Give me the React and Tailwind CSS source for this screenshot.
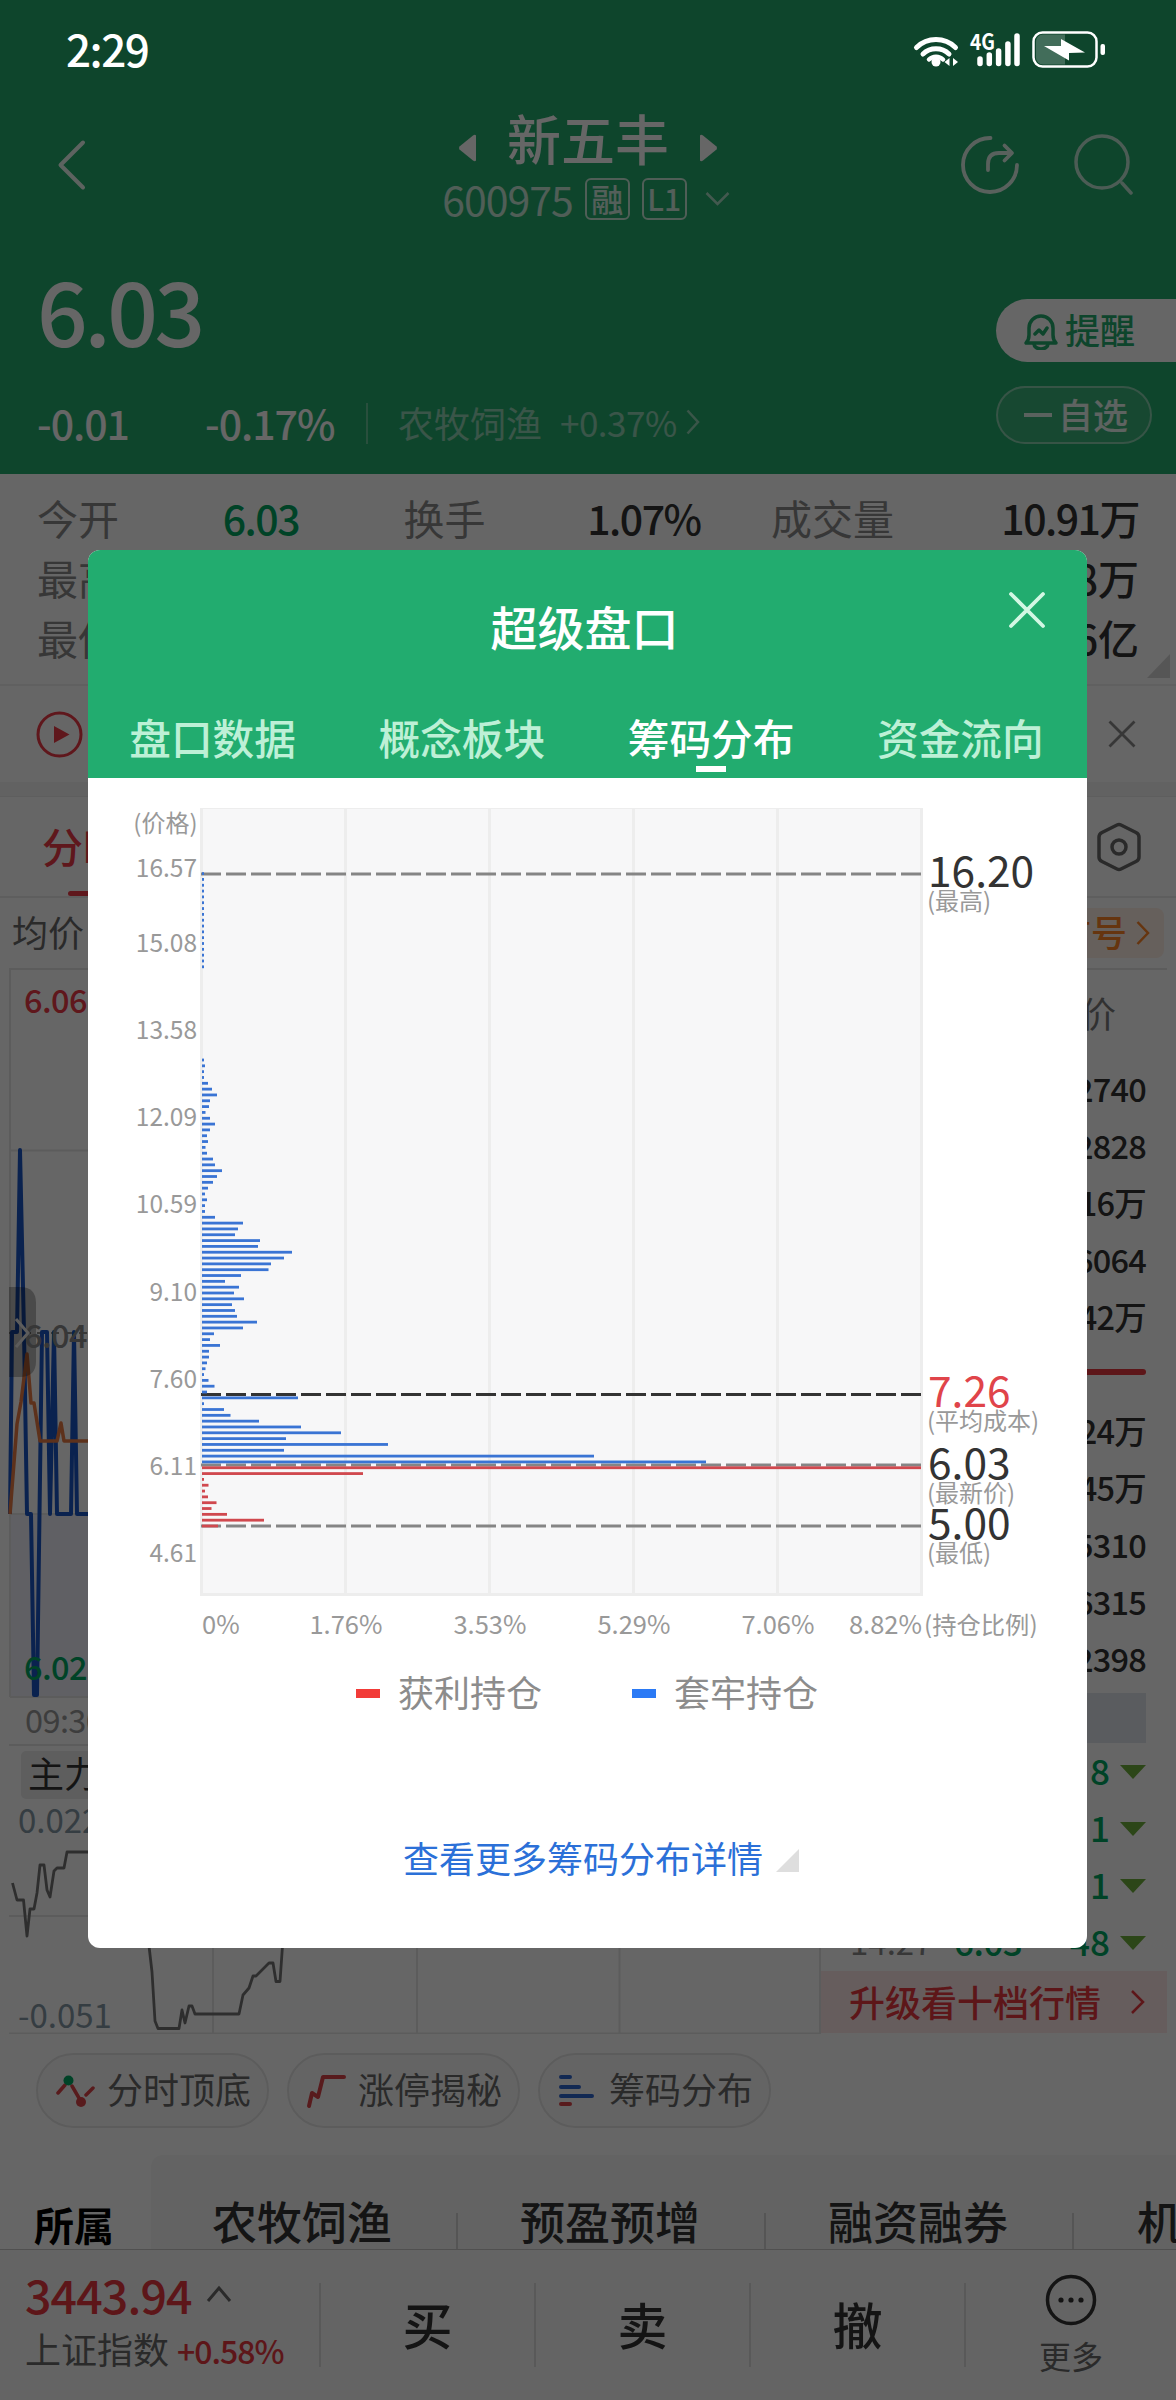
import React from "react";

const GREEN = "#00a862";

// 筹码分布: 从最低价往上, 每档的柱长
const profitChips = [16, 62, 25, 9.5, 14.5, 6, 3, 6.5, 2, 161, 719];
const lockedChips = [
  504, 392, 82, 186, 84, 139, 99, 57, 28.5, 22, 2, 96, 5, 12.5, 6.5, 2, 3.5, 5,
  7, 7, 18, 8, 12, 41, 55, 35, 33, 30, 42, 32, 37, 23, 39, 66.5, 69, 82, 90, 56,
  58, 33, 36, 41, 13, 3, 3, 5, 3, 6, 11, 15, 20, 13, 11, 5, 3.5, 6, 5, 8, 13, 8,
  3.5, 7, 8, 15, 10, 6, 2, 2, 3, 2,
];
const topChips = Array(17).fill(2);

const chipBars = [
  ...profitChips.map((w, i) => ({ w, k: i, color: "#d0484e" })),
  ...lockedChips.map((w, i) => ({ w, k: i + 11, color: "#3a74d4" })),
  ...topChips.map((w, i) => ({ w, k: i + 96, color: "#3a74d4" })),
];

const priceTicks = [
  ["16.57", 877],
  ["15.08", 952],
  ["13.58", 1039],
  ["12.09", 1126],
  ["10.59", 1213],
  ["9.10", 1301],
  ["7.60", 1388],
  ["6.11", 1475],
  ["4.61", 1562],
];

const ratioTicks = [
  ["1.76%", 346],
  ["3.53%", 490],
  ["5.29%", 634],
  ["7.06%", 778],
];

const priceMarks = [
  { price: "16.20", name: "(最高)", line: 874, y: 887, stroke: "#858585", fill: "#333" },
  { price: "7.26", name: "(平均成本)", line: 1394.5, y: 1407, stroke: "#333", fill: "#e0444a" },
  { price: "6.03", name: "(最新价)", line: 1465, y: 1479, stroke: "#858585", fill: "#333" },
  { price: "5.00", name: "(最低)", line: 1526, y: 1539, stroke: "#858585", fill: "#333" },
];

const modalTabs = ["盘口数据", "概念板块", "筹码分布", "资金流向"];
const asks = ["2740", "2828", "16万", "6064", "42万"];
const bids = ["24万", "45万", "5310", "6315", "2398"];
const deals = [
  { vol: "8" },
  { vol: "1" },
  { vol: "1" },
  { time: "14:27", price: "6.03", vol: "48" },
];

function StatusBar() {
  return (
    <div className="absolute inset-x-0 top-0 flex h-[100px] justify-between pl-[66px] pr-[70px] text-white">
      <span className="mt-[18px] text-[44px] font-medium leading-[60px] tracking-[-1.500px]">
        2:29
      </span>
      <svg className="mt-[28px]" width="194" height="44" viewBox="912 28 194 44" fill="none">
        <g stroke="#fff" strokeWidth="5" strokeLinecap="round">
          <path d="M916.500 47.500a28 28 0 0 1 39 0" />
          <path d="M923 54a19 19 0 0 1 26 0" />
          <path d="M929 59.500a10 10 0 0 1 14 0" strokeWidth="4.500" />
        </g>
        <circle cx="936" cy="62" r="4.500" fill="#fff" />
        <path d="M949.500 58v8l-5-4zM953 58v8l5-4z" fill="#fff" />
        <text x="970" y="50" fill="#fff" fontSize="22" fontWeight="700" textLength="25" lengthAdjust="spacingAndGlyphs">
          4G
        </text>
        <g stroke="#fff" strokeWidth="5.500" strokeLinecap="round">
          <path d="M980 59v4.500M989.300 55v8.500M998.600 51v12.500M1007.900 44v19.500M1017 36v27.500" />
        </g>
        <rect x="1033.500" y="32.500" width="63" height="34" rx="9" stroke="#fff" strokeWidth="2.500" />
        <path d="M1043 34.500h22v30h-22a7 7 0 0 1-7-7v-16a7 7 0 0 1 7-7z" fill="#fff" fillOpacity=".22" />
        <path d="M1061 39l24 13.500-16 .5v7.500l-25-14.500h17z" fill="#fff" />
        <rect x="1100.500" y="44" width="4.500" height="11" rx="2" fill="#fff" />
      </svg>
    </div>
  );
}

function Header() {
  return (
    <header className="h-[474px] bg-[#25ac6e] pt-[100px] text-white">
      <div className="flex h-[130px]">
        <div className="w-[300px] pl-[56px] pt-[38px]">
          <svg width="32" height="54" viewBox="0 0 32 54" fill="none" stroke="#fff" strokeOpacity=".9" strokeWidth="4" strokeLinecap="round" strokeLinejoin="round">
            <path d="M27 4.500L4.500 27 27 49.500" />
          </svg>
        </div>
        <div className="flex flex-1 flex-col items-center pt-[7px]">
          <div className="flex h-[61px] items-center gap-[30px]">
            <svg className="mt-[20px]" width="19" height="28" viewBox="0 0 19 28" fill="#fff">
              <path d="M18 1.500v25q-1 1.500-3 0L1.500 15.500q-1-1.500 0-3L15 1.500q2-1.500 3 0z" />
            </svg>
            <h1 className="text-[54px] font-medium leading-[60px]">新五丰</h1>
            <svg className="mt-[20px]" width="19" height="28" viewBox="0 0 19 28" fill="#fff">
              <path d="M1 1.500v25q1 1.500 3 0l13.500-11q1-1.500 0-3L4 1.500q-2-1.500-3 0z" />
            </svg>
          </div>
          <div className="mr-[4px] mt-[10px] flex h-[42px] items-center">
            <span className="-mt-[3px] mr-[12px] text-[41px] leading-[42px] tracking-[-1px] text-white/75">
              600975
            </span>
            <span className="mr-[12px] flex h-[42px] w-[45px] items-center justify-center rounded-[6px] border-2 border-white/75 pb-[3px] text-[32px] font-medium leading-none text-white/80">
              融
            </span>
            <span className="flex h-[42px] w-[45px] items-center justify-center rounded-[6px] border-2 border-white/75 pb-[3px] text-[30px] font-medium leading-none text-white/80">
              L1
            </span>
            <svg className="ml-[18px]" width="25" height="16" viewBox="0 0 25 16" fill="none" stroke="#fff" strokeOpacity=".6" strokeWidth="2.500">
              <path d="M1.500 2l11 11 11-11" />
            </svg>
          </div>
        </div>
        <div className="flex w-[300px] justify-end gap-[53px] pr-[43px] pt-[34px]">
          <svg width="60" height="62" viewBox="0 0 60 62" fill="none" stroke="#fff" strokeOpacity=".85" strokeWidth="3.800" strokeLinecap="round" strokeLinejoin="round">
            <path d="M30.500 4A27 27 0 1 0 57 31" />
            <path d="M28 36v-6q0-11 11-11h12M44.500 11.500L52 19l-7.500 7.500" />
          </svg>
          <svg width="60" height="62" viewBox="0 0 60 62" fill="none" stroke="#fff" strokeOpacity=".7" strokeWidth="3.500" strokeLinecap="round">
            <circle cx="29" cy="28" r="26" />
            <path d="M49 49l9 10" />
          </svg>
        </div>
      </div>
      <div className="flex justify-between">
        <div className="pt-[34px]">
          <div className="pl-[37px] text-[89px] font-medium leading-[90px] tracking-[-3.500px]">
            6.03
          </div>
          <div className="mt-[47px] flex h-[41px] items-center pl-[37px] text-[41px] font-medium leading-[40px]">
            <span className="w-[168px] tracking-[-1px]">-0.01</span>
            <span className="w-[161px] tracking-[-1px]">-0.17%</span>
            <span className="mt-[4px] h-[41px] w-[2px] bg-white/30" />
            <span className="ml-[30px] text-[36px] font-normal text-white/50">农牧饲渔</span>
            <span className="ml-[18px] text-[35px] font-normal tracking-[-0.500px] text-white/50">
              +0.37%
            </span>
            <svg className="ml-[9px]" width="14" height="26" viewBox="0 0 14 26" fill="none" stroke="#fff" strokeOpacity=".5" strokeWidth="2.500">
              <path d="M1.500 1.500L12 13 1.500 24.500" />
            </svg>
          </div>
        </div>
        <div className="w-[180px] pt-[69px]">
          <div className="flex h-[63px] items-center rounded-l-full bg-white pl-[27px] text-[#25ac6e]">
            <svg width="36" height="38" viewBox="0 0 36 38" fill="none" stroke="#25ac6e" strokeWidth="3.500" strokeLinecap="round" strokeLinejoin="round">
              <path d="M3 31h30q-3-3-3-8v-7a12 12 0 0 0-24 0v7q0 5-3 8z" />
              <path d="M11 32a7 5 0 0 0 14 0M12 22l4-4 4 4 4-6" />
            </svg>
            <span className="-mt-[4px] ml-[6px] text-[35px] font-medium leading-[40px]">提醒</span>
          </div>
          <div className="mt-[24px] flex h-[58px] w-[156px] items-center rounded-full border-2 border-white/40 bg-white/10 pl-[26px]">
            <span className="h-[4px] w-[28px] bg-white/85" />
            <span className="-mt-[3px] ml-[6px] text-[35px] font-medium leading-[40px] text-white/90">
              自选
            </span>
          </div>
        </div>
      </div>
    </header>
  );
}

function Stat({ label, value, green, className }) {
  return (
    <div className={`flex h-[60px] items-center justify-between ${className}`}>
      <span className="text-[#8a8a8a]">{label}</span>
      <span
        className={
          green
            ? "font-medium tracking-[-1.500px] text-[#00a862]"
            : "font-medium tracking-[-1.500px] text-[#333]"
        }
      >
        {value}
      </span>
    </div>
  );
}

function Stats() {
  return (
    <section className="relative h-[212px] border-b-2 border-[#efefef] pl-[37px] pr-[37px] pt-[13px] text-[41px] leading-[60px]">
      <div className="flex justify-between">
        <Stat label="今开" value="6.03" green className="w-[262px]" />
        <Stat label="换手" value="1.07%" className="ml-[34px] w-[297px]" />
        <Stat label="成交量" value="10.91万" className="w-[368px]" />
      </div>
      <div className="flex justify-between">
        <span className="text-[#8a8a8a]">最高</span>
        <span className="font-medium text-[#333]">8万</span>
      </div>
      <div className="flex justify-between">
        <span className="text-[#8a8a8a]">最低</span>
        <span className="font-medium text-[#333]">6亿</span>
      </div>
      <svg className="absolute bottom-[6px] right-[6px]" width="23" height="24" viewBox="0 0 23 24">
        <path d="M23 0v24H0z" fill="#d8d8d8" />
      </svg>
    </section>
  );
}

function NoticeBar() {
  return (
    <div className="flex h-[96px] items-center justify-between pl-[36px] pr-[40px]">
      <svg width="47" height="47" viewBox="0 0 47 47" fill="none">
        <circle cx="23.500" cy="23.500" r="21.500" stroke="#ee3a46" strokeWidth="3" />
        <path d="M18 15v17l15.500-8.500z" fill="#ee3a46" />
      </svg>
      <svg width="28" height="28" viewBox="0 0 28 28" stroke="#8a8a8a" strokeWidth="2.800">
        <path d="M1.500 1.500l25 25M26.500 1.500l-25 25" />
      </svg>
    </div>
  );
}

function PeriodTabs() {
  return (
    <div className="flex h-[102px] items-center justify-between border-b-2 border-t-[1px] border-[#ebebeb] pl-[42px] pr-[35px]">
      <div className="flex h-full flex-col justify-end">
        <span className="text-[41px] font-medium leading-[60px] text-[#ee3a46]">分时</span>
        <span className="ml-[26px] mt-[16px] h-[5px] w-[32px] rounded-full bg-[#ee3a46]" />
      </div>
      <svg width="44" height="50" viewBox="0 0 44 50" fill="none" stroke="#6a6a6a" strokeWidth="3.500" strokeLinejoin="round">
        <path d="M20 3q2-1 4 0l15 7.500q3 1.500 3 4.500v20q0 3-3 4.500L24 47q-2 1-4 0L5 39.500Q2 38 2 35V15q0-3 3-4.500z" />
        <circle cx="22" cy="25" r="7" />
      </svg>
    </div>
  );
}

function IntradayChart() {
  return (
    <svg className="shrink-0" width="821" height="1066" viewBox="0 968 821 1066" fill="none">
      <rect x="10" y="1514" width="811" height="183" fill="#eff1fb" />
      <g stroke="#e6e6e6" strokeWidth="2">
        <path d="M10 1697V969h811M10 1150.500h811M10 1514h811M10 1697h811" />
        <path d="M9 1745h812M9 1916h812M9 2033.500h812M213 1745v289M417 1745v289M619.500 1745v289M820 1697v337" />
      </g>
      <path d="M9 1333h200" stroke="#8a8a8a" strokeWidth="2" strokeDasharray="8 6" />
      <path
        d="M10 1514L12 1332h5L20 1150l4 182 3 182h4l3 181h3l5-363h5l3 182 4-182 3 182h14l3-182 3 182h60"
        stroke="#1b56c6"
        strokeWidth="4"
        strokeLinejoin="round"
      />
      <path
        d="M10 1514l7-90 4-22 6-48 4 49h3l6 38h17l4-18 3 18h60"
        stroke="#e87b45"
        strokeWidth="3.500"
        strokeLinejoin="round"
      />
      <path d="M9 1287h11q16 0 16 16v58q0 16-16 16H9z" fill="#000" fillOpacity=".28" />
      <g fontSize="32.500" fontWeight="500" letterSpacing="-.6">
        <text x="24" y="1013" fill="#ee3a46">6.06</text>
        <text x="24" y="1348" fill="#8a8a8a">6.04</text>
        <text x="24" y="1680" fill={GREEN}>6.02</text>
        <text x="25" y="1733" fill="#999" fontWeight="400">09:30</text>
      </g>
      <path d="M16 1319l12 14-12 14" stroke="#e6e6e6" strokeWidth="3" />
      <rect x="21" y="1751" width="190" height="48" rx="5" fill="#ebebeb" />
      <text x="28" y="1788" fontSize="36" fill="#333">主力资金</text>
      <g fontSize="33" fill="#8598a6">
        <text x="18" y="1833">0.022</text>
        <text x="18" y="2028">-0.051</text>
      </g>
      <g stroke="#747474" strokeWidth="2.800" strokeLinejoin="round">
        <path d="M12.500 1883l4.500 17h6.500l3.500 36 3-27h4l3-16 3-28h4l3 25 3 7 4-26 3-3h7l3-16h29" />
        <path d="M149 1946L152 1972 155 2021 158 2028.500H179L182 2010 185 2023 189 2006H192L195 2014H239L243 1995 249 1988 253 1976H256L269 1963H273L276 1981.500H280L282.500 1946" />
      </g>
    </svg>
  );
}

function QuoteRow({ children }) {
  return (
    <div className="h-[57px] pr-[30px] pt-[2px] text-right text-[32.500px] font-medium leading-[57px] tracking-[-0.800px] text-[#333]">
      {children}
    </div>
  );
}

function OrderBook() {
  return (
    <div className="w-[355px]">
      <div className="mr-[9px] h-[89px] border-t-2 border-[#e6e6e6] pr-[51px] text-right text-[36px] leading-[84px] text-[#7a7a7a]">
        均价
      </div>
      {asks.map((v) => (
        <QuoteRow key={v}>{v}</QuoteRow>
      ))}
      <div className="flex h-[57px] items-center justify-end pr-[30px] pt-[3px]">
        <span className="h-[6px] w-[296px] rounded-full bg-[#e8383f]" />
      </div>
      {bids.map((v) => (
        <QuoteRow key={v}>{v}</QuoteRow>
      ))}
      <div className="ml-auto mr-[30px] mt-[9px] h-[50px] w-[296px] bg-[#e0e6ee]" />
      {deals.map((d, i) => (
        <div key={i} className="flex h-[57px] items-center pl-[29px] text-[35px] font-medium leading-[54px] text-[#00a862]">
          <span className="-mt-[4px] w-[104px] text-[33px] font-normal text-[#8a8a8a]">{d.time}</span>
          <span className="-mt-[4px] w-[76px] tracking-[-0.500px]">{d.price}</span>
          <span className="-mt-[4px] w-[80px] text-right">{d.vol}</span>
          <svg className="ml-[10px]" width="26" height="14" viewBox="0 0 26 14">
            <path d="M0 0h26L13 14z" fill="#6fae3c" />
          </svg>
        </div>
      ))}
      <div className="mr-[9px] flex h-[62px] items-center bg-[#ffe8e8] pl-[28px] text-[36px] font-medium leading-[50px] text-[#e8383f]">
        <span className="-mt-[3px]">升级看十档行情</span>
        <svg className="ml-[29px]" width="15" height="26" viewBox="0 0 15 26" fill="none" stroke="#e8383f" strokeWidth="2.500">
          <path d="M2 2l11 11L2 24" />
        </svg>
      </div>
    </div>
  );
}

function ToolChip({ label, children }) {
  return (
    <div className="flex h-[75px] w-[233px] items-center rounded-full border-2 border-[#e6e6e6] bg-[#fbfbfb] pl-[17px]">
      <svg width="40" height="40" viewBox="0 0 40 40" fill="none" strokeWidth="4" strokeLinecap="round" strokeLinejoin="round">
        {children}
      </svg>
      <span className="-mt-[6px] ml-[12px] text-[36px] leading-[50px] text-[#6a6a6a]">{label}</span>
    </div>
  );
}

function Tools() {
  return (
    <div className="flex h-[121px] gap-[18px] pl-[36px] pt-[19px]">
      <ToolChip label="分时顶底">
        <path d="M3 22l7-8M17 15l7 12M31 24l7-7" stroke="#dc4449" strokeWidth="3.500" />
        <circle cx="13.500" cy="9.500" r="5" fill={GREEN} />
        <circle cx="26" cy="31" r="5" fill="#dc4449" />
      </ToolChip>
      <ToolChip label="涨停揭秘">
        <path d="M3 35l3-13 6 4 5-20h21" stroke="#dc4449" />
      </ToolChip>
      <ToolChip label="筹码分布">
        <path d="M4 6h9M4 16h18M4 25h31" stroke="#2f66d0" />
        <path d="M4 33h9" stroke="#dc4449" />
      </ToolChip>
    </div>
  );
}

function ConceptStrip() {
  return (
    <div className="flex h-[94px] overflow-hidden">
      <div className="w-[151px] pl-[34px] pt-[41px] text-[40px] font-bold leading-[56px] text-black">
        所属
      </div>
      <div className="flex flex-1 overflow-hidden rounded-tl-[12px] bg-[#f7f7f7] pt-[36px] text-[45px] leading-[59px] whitespace-nowrap text-[#333]">
        {["农牧饲渔", "预盈预增", "融资融券"].map((name) => (
          <div key={name} className="flex w-[308px] shrink-0 justify-between pl-[61px]">
            <span className="font-medium">{name}</span>
            <span className="mr-[1px] mt-[22px] h-[40px] w-[2px] bg-[#d5d5d5]" />
          </div>
        ))}
        <div className="shrink-0 pl-[62px] font-medium">机构</div>
      </div>
    </div>
  );
}

function BottomBar() {
  return (
    <footer className="flex h-[151px] border-t border-[#c8c8c8] bg-[#f9f9f9]">
      <div className="w-[319px] pl-[25px] pt-[16px]">
        <div className="flex h-[56px] items-center text-[46.500px] font-medium leading-[56px] tracking-[-0.900px] text-[#e8383f]">
          3443.94
          <svg className="ml-[14px]" width="26" height="18" viewBox="0 0 26 18" fill="none" stroke="#6a6a6a" strokeWidth="3">
            <path d="M2 16L13 3l11 13" />
          </svg>
        </div>
        <div className="flex h-[52px] items-center whitespace-nowrap text-[36px] leading-[52px] text-[#6a6a6a]">
          上证指数
          <span className="ml-[8px] mt-[4px] text-[32px] font-medium tracking-[-1px] text-[#e8383f]">
            +0.58%
          </span>
        </div>
      </div>
      {["买", "卖", "撤"].map((name) => (
        <div key={name} className="flex w-[215px] items-center">
          <span className="h-[84px] w-[2px] bg-[#dedede]" />
          <span className="-mt-[5px] flex-1 text-center text-[50px] font-medium leading-[140px] text-[#333]">
            {name}
          </span>
        </div>
      ))}
      <div className="flex flex-1 items-center">
        <span className="h-[84px] w-[2px] bg-[#dedede]" />
        <div className="-mt-[2px] flex flex-1 flex-col items-center">
          <svg width="52" height="52" viewBox="0 0 52 52" fill="none">
            <circle cx="26" cy="26" r="23.500" stroke="#333" strokeWidth="3.500" />
            <g fill="#333">
              <circle cx="16" cy="26" r="2.600" />
              <circle cx="26" cy="26" r="2.600" />
              <circle cx="36" cy="26" r="2.600" />
            </g>
          </svg>
          <span className="mt-[9px] text-[32px] leading-[40px] text-[#6a6a6a]">更多</span>
        </div>
      </div>
    </footer>
  );
}

function ChipChart() {
  return (
    <svg width="999" height="860" viewBox="88 778 999 860" fill="none">
      <rect x="200" y="808" width="723" height="788" fill="#f7f7f8" />
      <path d="M200 808.500h723" stroke="#ededed" />
      <path
        d="M201.500 808v788M345.500 808v788M489.500 808v788M633.500 808v788M777.500 808v788M921.500 808v788M200 1594.500h723"
        stroke="#ededed"
        strokeWidth="3"
      />
      {priceMarks.map((m) => (
        <path key={m.price} d={`M201 ${m.line}H921`} stroke={m.stroke} strokeWidth="3" strokeDasharray="20 5" />
      ))}
      {chipBars.map((b) => (
        <rect key={b.k} x="202" y={1524.6 - b.k * 5.825} width={b.w} height="2.8" fill={b.color} />
      ))}
      <g fontSize="24.500" fill="#999" textAnchor="end">
        <text x="197.500" y="832" fontSize="24">(价格)</text>
        {priceTicks.map(([t, y]) => (
          <text key={t} x="197" y={y}>{t}</text>
        ))}
      </g>
      <g fontSize="25.500" fill="#999" textAnchor="middle">
        <text x="202" y="1634" textAnchor="start">0%</text>
        {ratioTicks.map(([t, x]) => (
          <text key={t} x={x} y="1634">{t}</text>
        ))}
        <text x="922" y="1634" textAnchor="end">8.82%</text>
        <text x="924" y="1634" textAnchor="start" fontSize="24.300">(持仓比例)</text>
      </g>
      {priceMarks.map((m) => (
        <g key={m.price}>
          <text x="928" y={m.y} fontSize="42.500" fill={m.fill}>{m.price}</text>
          <text x="927" y={m.y + 23} fontSize="24" fill="#999">{m.name}</text>
        </g>
      ))}
    </svg>
  );
}

function ChipModal() {
  return (
    <div className="absolute left-[88px] top-[550px] h-[1398px] w-[999px] overflow-hidden rounded-[12px] bg-white">
      <div className="h-[228px] bg-[#22ac6f]">
        <div className="flex h-[157px] items-start justify-between pl-[41px] pr-[41px] pt-[41px]">
          <span className="w-[38px]" />
          <h2 className="mr-[6px] mt-[5px] text-[47px] font-medium leading-[60px] text-white">
            超级盘口
          </h2>
          <svg width="38" height="38" viewBox="0 0 38 38" stroke="#d3f7e4" strokeWidth="3.800" strokeLinecap="round">
            <path d="M3 3l32 32M35 3L3 35" />
          </svg>
        </div>
        <div className="flex pr-[2px] text-center text-[41.700px] leading-[60px]">
          {modalTabs.map((tab) => (
            <div key={tab} className="flex flex-1 flex-col items-center">
              <span className={tab === "筹码分布" ? "font-medium text-white" : "font-medium text-[#bdf0d6]"}>
                {tab}
              </span>
              {tab === "筹码分布" && <span className="-mt-[1px] h-[6px] w-[30px] bg-white" />}
            </div>
          ))}
        </div>
      </div>
      <ChipChart />
      <div className="mt-[28px] flex h-[50px] items-center pl-[268px] text-[36px] leading-[50px] text-[#8c8c8c]">
        <span className="mt-[5px] h-[9px] w-[24px] bg-[#f23b38]" />
        <span className="ml-[18px]">获利持仓</span>
        <span className="ml-[90px] mt-[5px] h-[9px] w-[24px] bg-[#2b7af5]" />
        <span className="ml-[18px]">套牢持仓</span>
      </div>
      <div className="mt-[116px] flex h-[50px] items-center pl-[315px] text-[36px] leading-[50px] text-[#2b70d8]">
        <span>查看更多筹码分布详情</span>
        <svg className="ml-[13px] mt-[6px]" width="23" height="23" viewBox="0 0 23 23">
          <path d="M23 0v23H0z" fill="#dedede" />
        </svg>
      </div>
    </div>
  );
}

export default function App() {
  return (
    <div className="relative h-[2400px] w-[1176px] overflow-hidden bg-white font-['Noto_Sans_CJK_SC',sans-serif]">
      <Header />
      <Stats />
      <NoticeBar />
      <div className="h-[14px] bg-[#f4f4f4]" />
      <PeriodTabs />
      <div className="flex h-[70px] items-center justify-between pl-[12px] pr-[12px] text-[36px] leading-[60px] text-[#6a6a6a]">
        <span className="mb-[4px]">均价</span>
        <div className="flex h-[50px] items-center rounded-[8px] bg-[#fff0e6] px-[14px] text-[#ff8426]">
          <span className="-mt-[4px] font-medium">信号</span>
          <svg className="ml-[9px]" width="14" height="26" viewBox="0 0 14 26" fill="none" stroke="#ff8426" strokeWidth="2.500">
            <path d="M1.500 2L12 13 1.500 24" />
          </svg>
        </div>
      </div>
      <div className="flex h-[1066px]">
        <IntradayChart />
        <OrderBook />
      </div>
      <Tools />
      <ConceptStrip />
      <BottomBar />
      <div className="absolute inset-0 bg-black/60" />
      <StatusBar />
      <ChipModal />
    </div>
  );
}
